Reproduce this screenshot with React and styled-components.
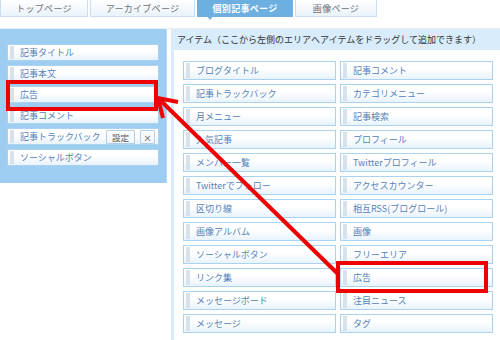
import React from 'react';
import styled, { createGlobalStyle } from 'styled-components';

const GlobalStyle = createGlobalStyle`
  html, body {
    margin: 0;
    padding: 0;
    background: #fff;
  }
  body {
    font-family: "Noto Sans CJK JP", "Noto Sans", sans-serif;
  }
`;

const Page = styled.div`
  position: relative;
  width: 500px;
  height: 340px;
  overflow: hidden;
  background: #fff;
`;

const TabBar = styled.div`
  display: flex;
  gap: 2px;
  height: 17px;
`;

const Tab = styled.div`
  position: relative;
  width: ${p => p.width}px;
  box-sizing: border-box;
  display: flex;
  align-items: center;
  justify-content: center;
  font-size: 9px;
  letter-spacing: 0.3px;
  color: ${p => (p.active ? '#fff' : '#707070')};
  font-weight: ${p => (p.active ? 700 : 400)};
  background: ${p => (p.active ? '#6cafe1' : 'linear-gradient(#ffffff, #e9f3fb)')};
  border: 1px solid ${p => (p.active ? '#6cafe1' : '#c9def0')};
  border-top: none;

  ${p => p.active && `
    &::after {
      content: '';
      position: absolute;
      left: 9px;
      bottom: -4px;
      border-left: 3px solid transparent;
      border-right: 3px solid transparent;
      border-top: 4px solid #6cafe1;
    }
  `}
`;

const Rule = styled.div`
  height: 1px;
  margin-top: 11px;
  background: #e6edf4;
`;

const Main = styled.div`
  display: flex;
  align-items: flex-start;
`;

const LeftPanel = styled.div`
  width: 167px;
  height: 154px;
  box-sizing: border-box;
  padding: 15px 7px 0 7px;
  background: #9dcdf0;
  border-right: 1px solid #b9d9f1;
  display: flex;
  flex-direction: column;
  gap: 4px;
`;

const Item = styled.div`
  position: relative;
  height: ${p => p.h}px;
  box-sizing: border-box;
  display: flex;
  align-items: center;
  padding-left: 12px;
  padding-right: 3px;
  font-size: 9px;
  color: #5582b8;
  background: linear-gradient(#ffffff 40%, #e8f3fc);
  border: 1px solid #abd3f0;
  white-space: nowrap;

  &::before {
    content: '';
    position: absolute;
    left: 2px;
    top: 1px;
    bottom: 1px;
    width: 4px;
    background-image: radial-gradient(circle, #d6e0ea 0.7px, transparent 0.8px);
    background-size: 2px 2px;
  }
`;

const Buttons = styled.div`
  margin-left: auto;
  display: flex;
  gap: 5px;
`;

const SmallButton = styled.div`
  width: ${p => p.width}px;
  height: 14px;
  box-sizing: border-box;
  display: flex;
  align-items: center;
  justify-content: center;
  font-size: 8.5px;
  color: #555;
  background: linear-gradient(#ffffff, #eef5fb);
  border: 1px solid #b3cfe6;
  border-radius: 1px;
`;

const RightPanel = styled.div`
  margin-left: 4px;
  flex: 1;
  display: flex;
  flex-direction: column;
`;

const Header = styled.div`
  height: 21px;
  box-sizing: border-box;
  display: flex;
  align-items: center;
  padding-left: 6px;
  background: #d8ecfb;
  font-size: 9px;
  color: #333;
  white-space: nowrap;
`;

const Palette = styled.div`
  border-left: 3px solid #d8ecfb;
  padding: 11px 6px 20px 9px;
  display: grid;
  grid-template-columns: 153px 153px;
  column-gap: 4px;
  row-gap: 4px;
`;

const Overlay = styled.svg`
  position: absolute;
  left: 0;
  top: 0;
  pointer-events: none;
`;

const tabs = [
  { label: 'トップページ', width: 88 },
  { label: 'アーカイブページ', width: 105 },
  { label: '個別記事ページ', width: 96, active: true },
  { label: '画像ページ', width: 82 },
];

const placed = ['記事タイトル', '記事本文', '広告', '記事コメント', '記事トラックバック', 'ソーシャルボタン'];

const palette = [
  'ブログタイトル', '記事コメント',
  '記事トラックバック', 'カテゴリメニュー',
  '月メニュー', '記事検索',
  '人気記事', 'プロフィール',
  'メンバー一覧', 'Twitterプロフィール',
  'Twitterでフォロー', 'アクセスカウンター',
  '区切り線', '相互RSS(ブログロール)',
  '画像アルバム', '画像',
  'ソーシャルボタン', 'フリーエリア',
  'リンク集', '広告',
  'メッセージボード', '注目ニュース',
  'メッセージ', 'タグ',
];

export default function App() {
  return (
    <Page>
      <GlobalStyle />
      <TabBar>
        {tabs.map(t => (
          <Tab key={t.label} width={t.width} active={t.active}>{t.label}</Tab>
        ))}
      </TabBar>
      <Rule />
      <Main>
        <LeftPanel>
          {placed.map(name => (
            <Item key={name} h={17}>
              {name}
              {name === '記事トラックバック' && (
                <Buttons>
                  <SmallButton width={29}>設定</SmallButton>
                  <SmallButton width={15}>×</SmallButton>
                </Buttons>
              )}
            </Item>
          ))}
        </LeftPanel>
        <RightPanel>
          <Header>アイテム（ここから左側のエリアへアイテムをドラッグして追加できます）</Header>
          <Palette>
            {palette.map((name, i) => (
              <Item key={i} h={19}>{name}</Item>
            ))}
          </Palette>
        </RightPanel>
      </Main>
      <Overlay width="500" height="340" viewBox="0 0 500 340">
        <g fill="none" stroke="#ee0000" strokeWidth="4">
          <rect x="8" y="82" width="148" height="27" />
          <rect x="338" y="263" width="148" height="28" />
          <line x1="160" y1="100" x2="338" y2="274" />
          <polyline points="178,102 158,98 163,118" strokeLinejoin="miter" />
        </g>
      </Overlay>
    </Page>
  );
}
